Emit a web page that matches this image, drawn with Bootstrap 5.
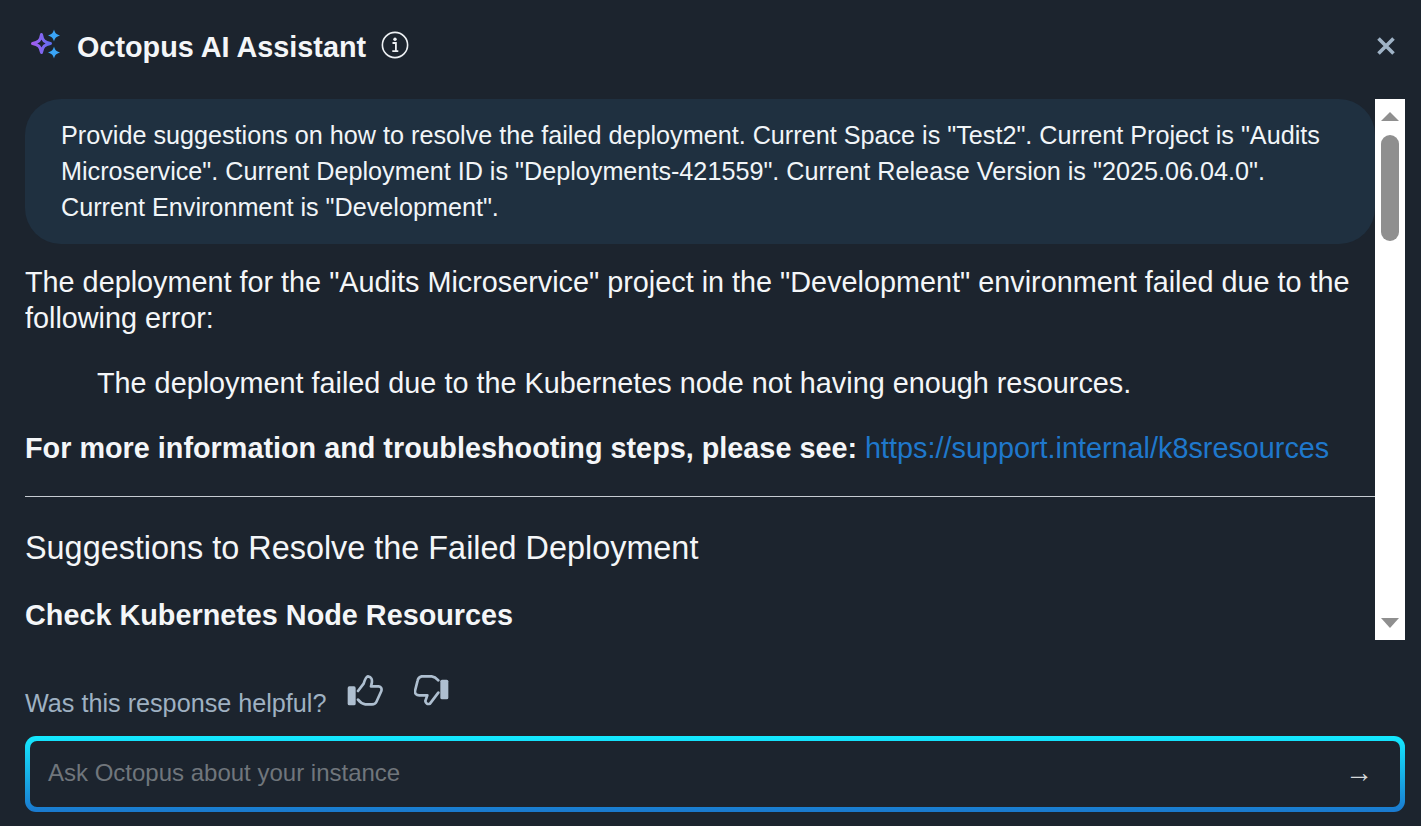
<!DOCTYPE html>
<html lang="en"><head><meta charset="utf-8"><title>Octopus AI Assistant</title>
<link href="https://cdn.jsdelivr.net/npm/bootstrap@5.3.0/dist/css/bootstrap.min.css" rel="stylesheet">
<style>
html,body{height:100%;margin:0}
body{background:#1c242e;color:#f4f6f8;font-family:"Liberation Sans",Arial,sans-serif;font-size:28.8px;line-height:36px;overflow:hidden}
.shell{width:1421px;height:826px;padding:0 16px 14px 25px}
.head{height:99px;padding-bottom:6px}
.spark{margin-left:3px;margin-top:-5px}
.title-txt{font-size:28.8px;font-weight:700;line-height:36px;margin:0 0 0 17px}
.info-ic{margin-left:15px;margin-top:-4px}
.close-x{margin-right:9px;margin-top:-1px}
.scroller{height:541px}
.feed{width:1350px;overflow:hidden}
.ask{background:#1f3040;color:#f1f5f8;border-radius:36px;padding:18px 36px 0;font-size:25.2px;height:145px}
.ans p{margin:0}
.para1{margin-top:20px!important}
.quote{margin:29px 0 0 72px!important}
.para3{margin-top:29px!important}
.ans a{color:#1f78cc;text-decoration:none}
.rule{border:0;border-top:1px solid #c6ccd2;opacity:1;margin:30px 0 0}
.sub1{font-size:32.4px;font-weight:400;line-height:40px;margin:31px 0 0;color:#f4f6f8}
.sub2{font-size:28.8px;font-weight:700;line-height:36px;margin:29px 0 0;color:#f4f6f8}
.bar{width:30px;background:#fff}
.thumb{width:18px;height:106px;border-radius:9px;background:#8f8f8f;margin-top:14px}
.tri-up{width:0;height:0;border-left:9px solid transparent;border-right:9px solid transparent;border-top:0;border-bottom:9px solid #8f8f8f;margin-top:13px}
.tri-dn{width:0;height:0;border-left:9px solid transparent;border-right:9px solid transparent;border-top:10px solid #8f8f8f;margin-bottom:12px}
.fb{height:96px;padding-top:35px}
.fb-txt{color:#9fb1c2;font-size:25.2px;line-height:36px;margin-top:10px}
.thumbs{gap:31px;margin-left:21px}
.inbox{height:76px;border-radius:11px;padding:5px;background:linear-gradient(#14e9ff,#1a79cf)}
.inbox-in{background:#1c242e;border-radius:7px;padding:0 27px 2px 18px;height:66px}
.ph{color:#70767c;font-size:24px}
.arrow{color:#d5d8da;font-size:28px}
</style></head><body>
<div class="shell d-flex flex-column">
 <div class="head d-flex align-items-center">
  <svg class="spark" width="32" height="32" viewBox="0 0 32 32"><defs><linearGradient id="g" x1="0" y1="0" x2="1" y2="0"><stop offset="0" stop-color="#a35cf0"/><stop offset="1" stop-color="#5f6ff0"/></linearGradient></defs>
   <path d="M13.5 6.5 C14.5 12.5 16.5 14.5 22.5 15.5 C16.5 16.5 14.5 18.5 13.5 24.5 C12.5 18.5 10.5 16.5 4.5 15.5 C10.5 14.5 12.5 12.5 13.5 6.5Z" fill="none" stroke="url(#g)" stroke-width="3" stroke-linejoin="round"/>
   <path d="M26 1.5 C27 5 28.3 6.4 32 7.5 C28.3 8.6 27 10 26 13.5 C25 10 23.7 8.6 20 7.5 C23.7 6.4 25 5 26 1.5Z" fill="#3aa5f7"/>
   <path d="M26 18.5 C27 22 28.3 23.4 32 24.5 C28.3 25.6 27 27 26 30.5 C25 27 23.7 25.6 20 24.5 C23.7 23.4 25 22 26 18.5Z" fill="#3aa5f7"/></svg>
  <h1 class="title-txt">Octopus AI Assistant</h1>
  <svg class="info-ic" width="28" height="28" viewBox="0 0 28 28"><circle cx="14" cy="14" r="12.6" fill="none" stroke="#eef1f4" stroke-width="1.6"/><circle cx="14" cy="8.2" r="1.7" fill="#eef1f4"/><path d="M11.5 12h3.4v8.2h2M11.3 20.2h6" fill="none" stroke="#eef1f4" stroke-width="1.8"/></svg>
  <svg class="close-x ms-auto" width="20" height="20" viewBox="0 0 20 20"><path d="M2.5 2.5 17.5 17.5M17.5 2.5 2.5 17.5" stroke="#9fb3c6" stroke-width="3.6"/></svg>
 </div>
 <div class="scroller d-flex">
  <div class="feed">
   <div class="ask">Provide suggestions on how to resolve the failed deployment. Current Space is "Test2". Current Project is "Audits Microservice". Current Deployment ID is "Deployments-421559". Current Release Version is "2025.06.04.0". Current Environment is "Development".</div>
   <div class="ans">
    <p class="para1">The deployment for the "Audits Microservice" project in the "Development" environment failed due to the following error:</p>
    <p class="quote">The deployment failed due to the Kubernetes node not having enough resources.</p>
    <p class="para3"><strong>For more information and troubleshooting steps, please see:</strong> <a href="#">https://support.internal/k8sresources</a></p>
    <hr class="rule">
    <h2 class="sub1">Suggestions to Resolve the Failed Deployment</h2>
    <h3 class="sub2">Check Kubernetes Node Resources</h3>
   </div>
  </div>
  <div class="bar d-flex flex-column align-items-center">
   <div class="tri-up"></div><div class="thumb"></div><div class="tri-dn mt-auto"></div>
  </div>
 </div>
 <div class="fb d-flex align-items-start">
  <span class="fb-txt">Was this response helpful?</span>
  <div class="thumbs d-flex">
   <svg width="36" height="31" viewBox="80 44 108 93"><rect x="82" y="78" width="24" height="57" rx="5" fill="#aebfd0"/><path d="M113 92 L130 70 Q136 50 143 48 Q158 50 154 70 L152 78 L175 78 Q186 80 183 92 L168 125 Q165 132 155 132 L135 132 Q122 130 113 118" fill="none" stroke="#aebfd0" stroke-width="8" stroke-linecap="round" stroke-linejoin="round"/></svg>
   <svg width="36" height="31" viewBox="282 44 108 93"><rect x="361" y="58" width="24" height="59" rx="5" fill="#aebfd0"/><path d="M355 60 Q345 49 335 48 L305 48 Q295 50 293 60 L285 92 Q284 104 298 105 L322 105 L316 122 Q318 134 330 130 L355 97" fill="none" stroke="#aebfd0" stroke-width="8" stroke-linecap="round" stroke-linejoin="round"/></svg>
  </div>
 </div>
 <div class="inbox"><div class="inbox-in d-flex align-items-center justify-content-between"><span class="ph">Ask Octopus about your instance</span><span class="arrow">→</span></div></div>
</div>
</body></html>
